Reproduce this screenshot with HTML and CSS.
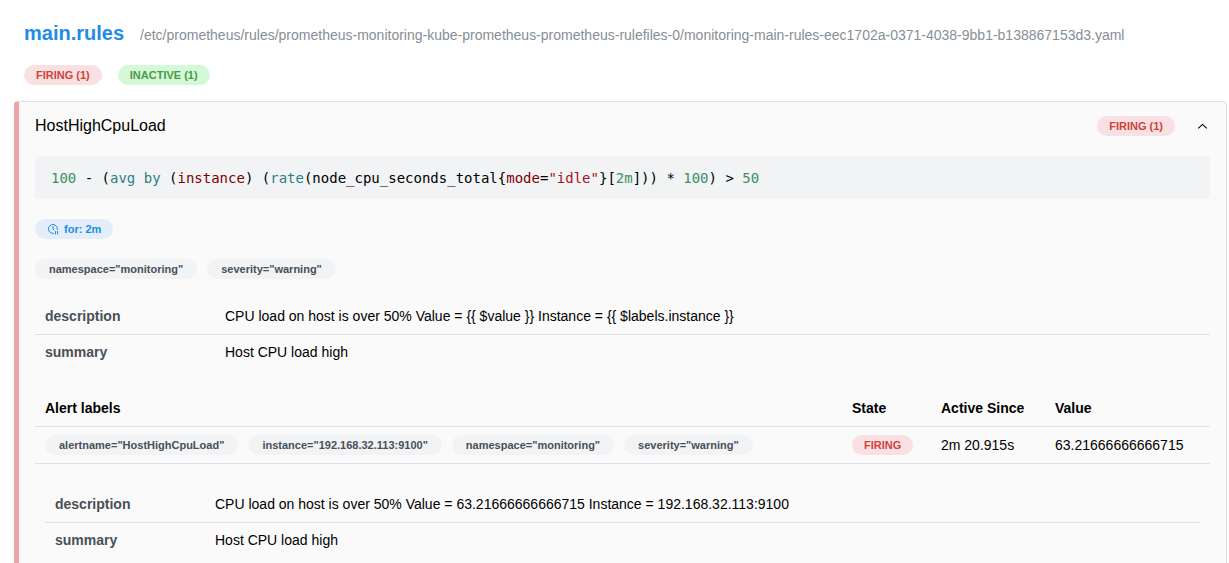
FILE: index.html
```html
<!DOCTYPE html>
<html lang="en">
<head>
<meta charset="utf-8">
<title>Alerts</title>
<link rel="stylesheet" href="styles.css">
</head>
<body>
<main class="page">
  <header class="group-header">
    <h1 class="group-title">main.rules</h1>
    <span class="group-file">/etc/prometheus/rules/prometheus-monitoring-kube-prometheus-prometheus-rulefiles-0/monitoring-main-rules-eec1702a-0371-4038-9bb1-b138867153d3.yaml</span>
  </header>
  <div class="group-counts">
    <span class="badge badge-firing">FIRING (1)</span>
    <span class="badge badge-inactive">INACTIVE (1)</span>
  </div>
  <section class="rule">
    <button class="rule-toggle" type="button" aria-expanded="true">
      <span class="rule-name">HostHighCpuLoad</span>
      <span class="badge badge-firing">FIRING (1)</span>
      <svg class="chevron" viewBox="0 0 15 15" aria-hidden="true"><path d="M3.2 9.4 7.5 5.4l4.3 4" fill="none" stroke="currentColor" stroke-width="1.1"/></svg>
    </button>
    <div class="rule-body">
      <pre class="expr"><code><span class="num">100</span> - (<span class="kw">avg</span> <span class="kw">by</span> (<span class="label">instance</span>) (<span class="kw">rate</span>(node_cpu_seconds_total{<span class="label">mode</span>=<span class="str">"idle"</span>}[<span class="num">2m</span>])) * <span class="num">100</span>) &gt; <span class="num">50</span></code></pre>
      <div class="badges">
        <span class="badge badge-for"><svg class="clock" viewBox="0 0 24 24" aria-hidden="true"><path d="M20.9 13A9 9 0 1 0 13 20.9M12 7v5l2 2M17 17v5M21 17v5" fill="none" stroke="currentColor" stroke-width="2" stroke-linecap="round" stroke-linejoin="round"/></svg>for: 2m</span>
      </div>
      <div class="badges">
        <span class="badge badge-label">namespace="monitoring"</span>
        <span class="badge badge-label">severity="warning"</span>
      </div>
      <table class="annotations">
        <tbody>
          <tr><th scope="row">description</th><td>CPU load on host is over 50% Value = {{ $value }} Instance = {{ $labels.instance }}</td></tr>
          <tr><th scope="row">summary</th><td>Host CPU load high</td></tr>
        </tbody>
      </table>
      <table class="alerts">
        <thead>
          <tr><th scope="col">Alert labels</th><th scope="col" class="col-state">State</th><th scope="col" class="col-since">Active Since</th><th scope="col" class="col-value">Value</th></tr>
        </thead>
        <tbody>
          <tr>
            <td>
              <div class="badges">
                <span class="badge badge-label">alertname="HostHighCpuLoad"</span>
                <span class="badge badge-label">instance="192.168.32.113:9100"</span>
                <span class="badge badge-label">namespace="monitoring"</span>
                <span class="badge badge-label">severity="warning"</span>
              </div>
            </td>
            <td><div class="badges"><span class="badge badge-firing">FIRING</span></div></td>
            <td>2m 20.915s</td>
            <td>63.21666666666715</td>
          </tr>
          <tr>
            <td colspan="4">
              <table class="annotations annotations-nested">
                <tbody>
                  <tr><th scope="row">description</th><td>CPU load on host is over 50% Value = 63.21666666666715 Instance = 192.168.32.113:9100</td></tr>
                  <tr><th scope="row">summary</th><td>Host CPU load high</td></tr>
                </tbody>
              </table>
            </td>
          </tr>
        </tbody>
      </table>
    </div>
  </section>
</main>
</body>
</html>
```

FILE: styles.css
```css
* {
  box-sizing: border-box;
}

body {
  margin: 0;
  background: #fff;
  color: #000;
  font-family: "Liberation Sans", Arial, sans-serif;
  font-size: 14px;
  line-height: 20px;
  overflow: hidden;
}

.page {
  padding: 20px 2px 0 14px;
}

.group-header {
  display: flex;
  align-items: baseline;
  gap: 16px;
  padding: 0 10px;
}

.group-title {
  margin: 0;
  color: #228be6;
  font-size: 20px;
  line-height: 26px;
}

.group-file {
  color: #868e96;
}

.group-counts {
  display: flex;
  gap: 16px;
  padding: 19px 10px 16px;
}

.badges {
  display: flex;
  flex-wrap: wrap;
  gap: 10px;
}

.badge {
  display: inline-flex;
  align-items: center;
  gap: 5px;
  height: 20px;
  padding: 0 12px;
  border-radius: 10px;
  font-size: 11px;
  font-weight: 700;
  white-space: nowrap;
}

.badge-label {
  padding: 0 14px;
  background: #f1f3f5;
  color: #495057;
}

.badge-firing {
  background: #f9e1e3;
  color: #d0423a;
}

.badge-inactive {
  background: #d3f9d8;
  color: #4b9a45;
}

.badge-for {
  background: #e3eefa;
  color: #228be6;
}

.clock {
  width: 12px;
  height: 12px;
}

.rule {
  border: 1px solid #dee2e6;
  border-left: 5px solid #eea3a7;
  border-radius: 4px;
  background: #fafafa;
}

.rule-toggle {
  display: flex;
  align-items: center;
  width: 100%;
  padding: 12px 16px;
  border: 0;
  background: none;
  color: inherit;
  font: inherit;
  text-align: left;
}

.rule-name {
  flex: 1;
  font-size: 16px;
  line-height: 24px;
}

.chevron {
  width: 15px;
  height: 15px;
  margin-left: 20px;
}

.rule-body {
  display: flex;
  flex-direction: column;
  gap: 20px;
  padding: 6px 16px 16px;
}

.expr {
  margin: 0;
  padding: 12px 16px 10px;
  border-radius: 4px;
  background: #f1f3f5;
  line-height: 21px;
}

.expr code {
  font-family: "DejaVu Sans Mono", monospace;
  font-size: 14px;
}

.num {
  color: #3d9064;
}

.kw {
  color: #2f8080;
}

.label {
  color: #800000;
}

.str {
  color: #a31515;
}

table {
  width: 100%;
  border-collapse: collapse;
  table-layout: fixed;
}

th,
td {
  padding: 8px 10px;
  text-align: left;
}

tr:not(:last-child) > th,
tr:not(:last-child) > td,
thead th {
  border-bottom: 1px solid #dee2e6;
}

.annotations th,
.annotations td {
  padding: 7px 10px 8px;
}

.annotations th {
  width: 180px;
  color: #495057;
}

.annotations-nested {
  margin: 15px 0;
}

.annotations-nested th {
  width: 160px;
}

.col-state {
  width: 89px;
}

.col-since {
  width: 114px;
}

.col-value {
  width: 165px;
}
```
